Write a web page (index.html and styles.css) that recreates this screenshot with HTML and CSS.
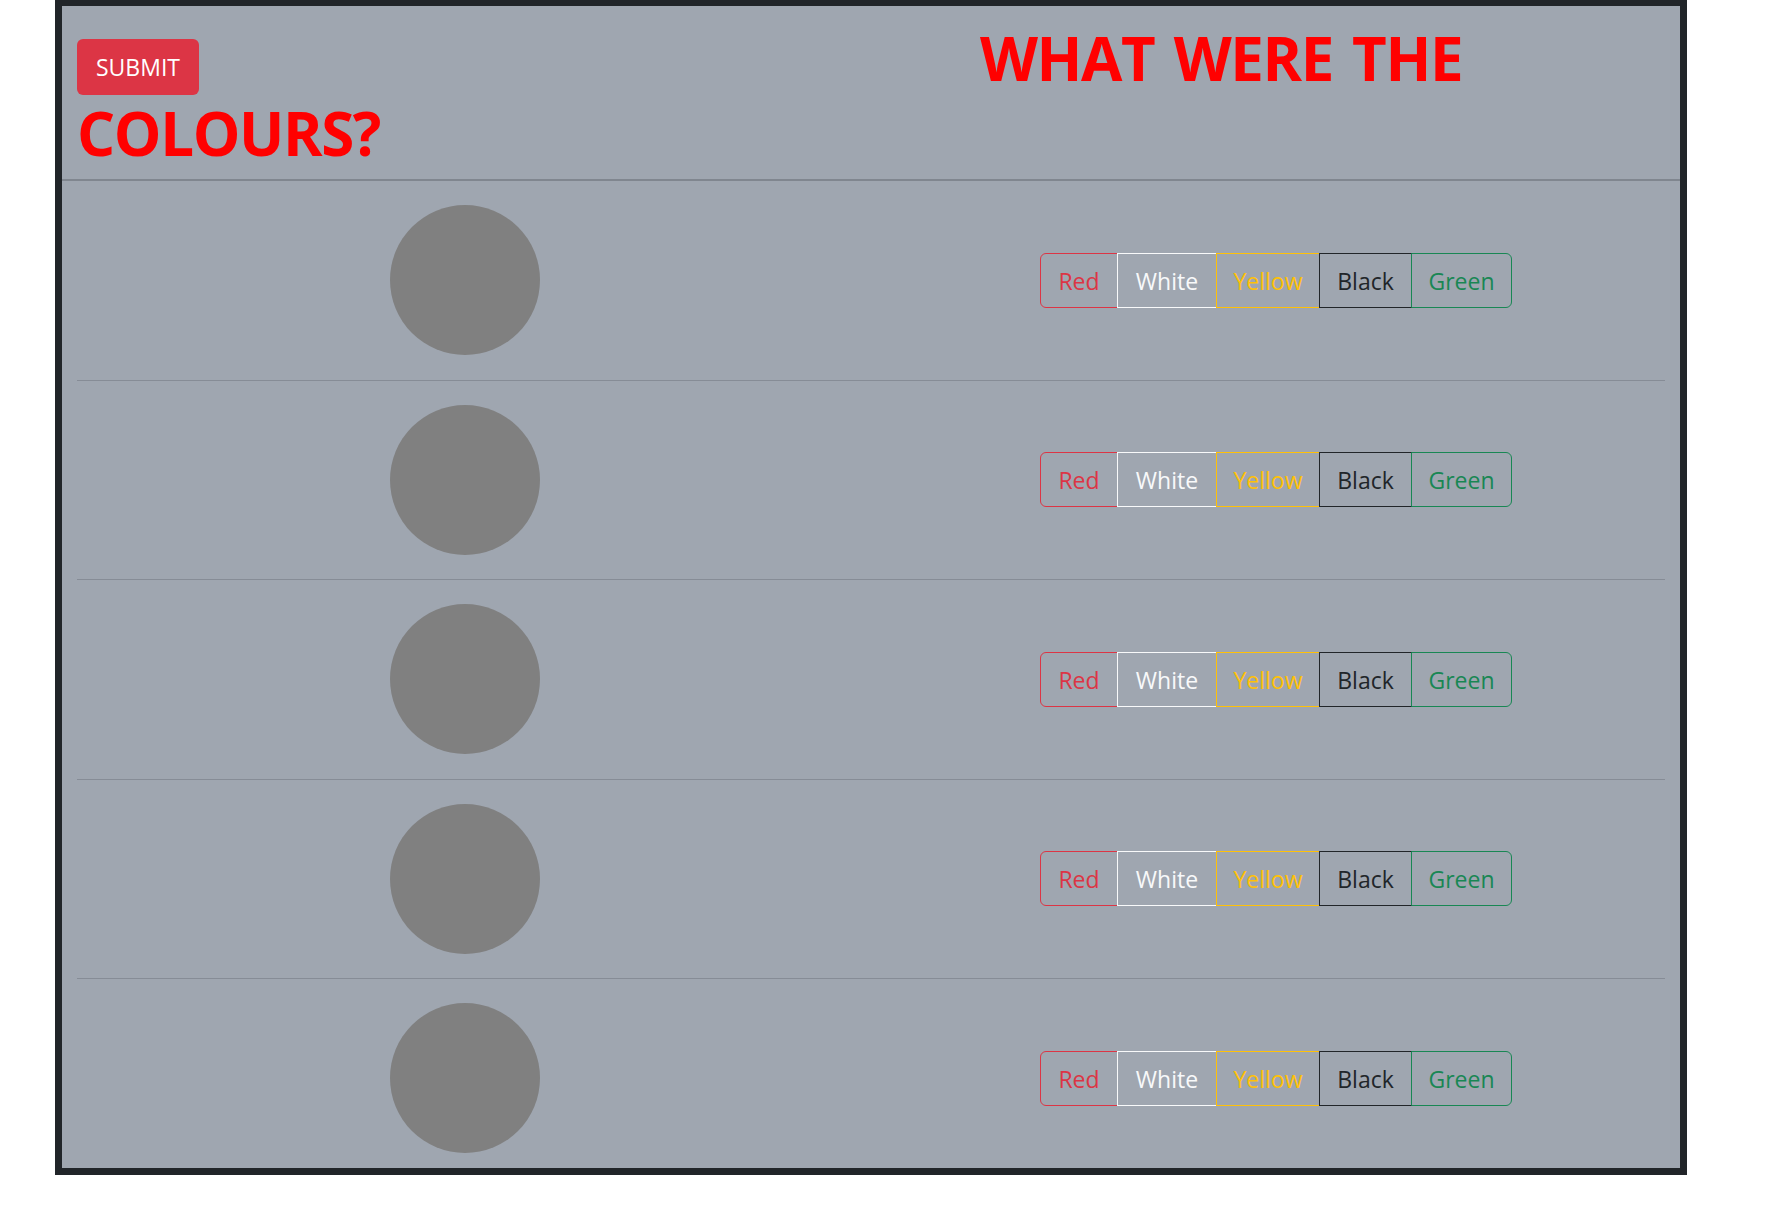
FILE: index.html
```html
<!DOCTYPE html>
<html lang="en">
<head>
<meta charset="utf-8">
<title>What were the colours?</title>
<link rel="stylesheet" href="styles.css">
</head>
<body>
<div class="board">
  <header class="board-head">
    <button class="submit" type="button">SUBMIT</button>
    <h1 class="title"><span class="title-l1">WHAT WERE THE</span> <span class="title-l2">COLOURS?</span></h1>
  </header>
  <div class="rows">
    <div class="row">
      <div class="cell-dot"><div class="dot"></div></div>
      <div class="cell-choices">
        <div class="choices">
          <button class="choice c-red" type="button">Red</button>
          <button class="choice c-white" type="button">White</button>
          <button class="choice c-yellow" type="button">Yellow</button>
          <button class="choice c-black" type="button">Black</button>
          <button class="choice c-green" type="button">Green</button>
        </div>
      </div>
    </div>
    <div class="row">
      <div class="cell-dot"><div class="dot"></div></div>
      <div class="cell-choices">
        <div class="choices">
          <button class="choice c-red" type="button">Red</button>
          <button class="choice c-white" type="button">White</button>
          <button class="choice c-yellow" type="button">Yellow</button>
          <button class="choice c-black" type="button">Black</button>
          <button class="choice c-green" type="button">Green</button>
        </div>
      </div>
    </div>
    <div class="row">
      <div class="cell-dot"><div class="dot"></div></div>
      <div class="cell-choices">
        <div class="choices">
          <button class="choice c-red" type="button">Red</button>
          <button class="choice c-white" type="button">White</button>
          <button class="choice c-yellow" type="button">Yellow</button>
          <button class="choice c-black" type="button">Black</button>
          <button class="choice c-green" type="button">Green</button>
        </div>
      </div>
    </div>
    <div class="row">
      <div class="cell-dot"><div class="dot"></div></div>
      <div class="cell-choices">
        <div class="choices">
          <button class="choice c-red" type="button">Red</button>
          <button class="choice c-white" type="button">White</button>
          <button class="choice c-yellow" type="button">Yellow</button>
          <button class="choice c-black" type="button">Black</button>
          <button class="choice c-green" type="button">Green</button>
        </div>
      </div>
    </div>
    <div class="row">
      <div class="cell-dot"><div class="dot"></div></div>
      <div class="cell-choices">
        <div class="choices">
          <button class="choice c-red" type="button">Red</button>
          <button class="choice c-white" type="button">White</button>
          <button class="choice c-yellow" type="button">Yellow</button>
          <button class="choice c-black" type="button">Black</button>
          <button class="choice c-green" type="button">Green</button>
        </div>
      </div>
    </div>
  </div>
</div>
</body>
</html>
```
FILE: styles.css
```css
html, body {
  margin: 0;
  padding: 0;
  background: #ffffff;
  font-family: "Open Sans", "Noto Sans", sans-serif;
}

.board {
  margin-left: 55px;
  width: 1632px;
  box-sizing: border-box;
  border: 7px solid #212529;
  border-top-width: 6px;
  background: #9fa6b0;
}

.board-head {
  display: grid;
  grid-template-columns: 122px 1fr;
  align-items: start;
  padding: 15px 15px 8px;
  border-bottom: 2px solid #80868f;
}

.submit {
  grid-column: 1;
  grid-row: 1;
  margin-top: 18px;
  width: 122px;
  height: 56px;
  padding: 0;
  border: 0;
  border-radius: 6px;
  background: #dc3545;
  color: #ffffff;
  font-family: "Open Sans", "Noto Sans", sans-serif;
  font-size: 23px;
  font-weight: 400;
}

.title {
  display: contents;
  color: #ff0000;
  font-family: "Open Sans", "Noto Sans", sans-serif;
  font-size: 60px;
  font-weight: 700;
  line-height: 75px;
  letter-spacing: -1.4px;
  word-spacing: 5px;
}

.title-l1 {
  grid-column: 2;
  grid-row: 1;
  padding-left: 781px;
  white-space: nowrap;
}

.title-l2 {
  grid-column: 1 / -1;
  grid-row: 2;
}

.rows {
  padding: 0 15px;
}

.row {
  display: grid;
  grid-template-columns: 776px 1fr;
  align-items: center;
  padding: 24px 0 24.5px;
  border-bottom: 1px solid #868c96;
}

.row:last-child {
  border-bottom: 0;
  padding-bottom: 15px;
}

.cell-dot {
  display: flex;
  justify-content: center;
}

.dot {
  width: 150px;
  height: 150px;
  border-radius: 50%;
  background: #808080;
}

.cell-choices {
  display: flex;
  justify-content: center;
  padding-left: 34px;
}

.choices {
  display: flex;
}

.choice {
  height: 55px;
  box-sizing: border-box;
  margin: 0 0 0 -1px;
  padding: 1px 0 0;
  border: 1px solid currentColor;
  background: transparent;
  font-family: "Open Sans", "Noto Sans", sans-serif;
  font-size: 23px;
  font-weight: 400;
}

.choice:first-child {
  margin-left: 0;
  border-radius: 6px 0 0 6px;
}

.choice:last-child {
  border-radius: 0 6px 6px 0;
}

.c-red { width: 78px; color: #dc3545; }
.c-white { width: 100px; color: #f8f9fa; }
.c-yellow { width: 104px; color: #ffc107; }
.c-black { width: 93px; color: #212529; }
.c-green { width: 101px; color: #198754; }
```
